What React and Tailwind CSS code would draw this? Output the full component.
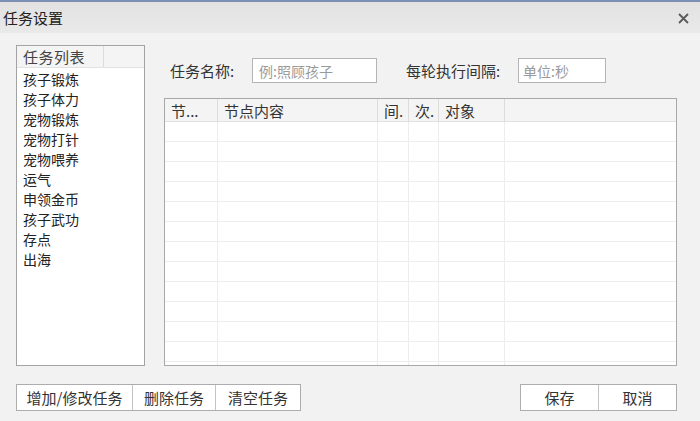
import React from 'react';

const tasks = ['孩子锻炼', '孩子体力', '宠物锻炼', '宠物打针', '宠物喂养', '运气', '申领金币', '孩子武功', '存点', '出海'];
const columns = ['节...', '节点内容', '间.', '次.', '对象', ''];
const rows = Array.from({ length: 13 });

const App = () => {
    return (
        <div className="w-[700px] h-[421px] overflow-hidden flex flex-col bg-[#f2f2f2] text-[#2b2b2b] font-['Noto_Sans_CJK_SC','Noto_Sans',sans-serif]">
            {/* window top edge */}
            <div className="h-[2px] shrink-0 bg-[#7c8fb5]" />

            {/* Title bar */}
            <div className="h-[31px] shrink-0 flex items-center justify-between pl-[3px] pr-[11px] bg-gradient-to-b from-[#e2e2e2] to-[#e9e9e9]">
                <span className="text-[15px] leading-none text-[#222]">任务设置</span>
                <svg width="11" height="11" viewBox="0 0 11 11" className="mt-[2px]">
                    <path d="M1 1 L10 10 M10 1 L1 10" stroke="#5a5a5a" strokeWidth="1.8" />
                </svg>
            </div>

            <div className="flex-1 min-h-0 flex flex-col pl-[16px] pr-[23px] pt-[12px] pb-[10px]">
                <div className="flex-1 flex gap-[19px] min-h-0">
                    {/* Task list */}
                    <div className="w-[129px] border border-[#a3a3a3] bg-white flex flex-col">
                        <div className="h-[22px] shrink-0 flex bg-[#f4f4f4] border-b border-[#e2e2e2]">
                            <div className="w-[87px] border-r border-[#dcdcdc] pl-[6px] flex items-center text-[15px] leading-none tracking-[0.5px] text-[#444]">任务列表</div>
                            <div className="flex-1" />
                        </div>
                        <div className="pt-[1px]">
                            {tasks.map((t) => (
                                <div key={t} className="h-[20px] pl-[6px] flex items-center text-[14px] leading-none text-[#222]">{t}</div>
                            ))}
                        </div>
                    </div>

                    {/* Right side */}
                    <div className="w-[513px] min-h-0 flex flex-col pt-[13px]">
                        <div className="h-[25px] shrink-0 flex items-center">
                            <div className="w-[88px] pl-[6px] text-[15px] leading-none text-[#333]">任务名称:</div>
                            <div className="w-[125px] h-[25px] border border-[#b4b4b4] bg-white flex items-center pl-[6px] text-[14px] leading-none text-[#9a9a9a]">例:照顾孩子</div>
                            <div className="w-[29px]" />
                            <div className="w-[112px] text-[15px] leading-none text-[#333]">每轮执行间隔:</div>
                            <div className="w-[88px] h-[25px] border border-[#b4b4b4] bg-white flex items-center pl-[4px] text-[14px] leading-none text-[#9a9a9a]">单位:秒</div>
                        </div>

                        {/* Node table */}
                        <div className="mt-[15px] flex-1 min-h-0 border border-[#a8a8a8] bg-white overflow-hidden">
                            <div className="grid grid-cols-[53px_160px_31px_30px_66px_1fr] h-[23px] bg-[#f4f4f4] border-b border-[#e0e0e0]">
                                {columns.map((c, i) => (
                                    <div key={i} className={`flex items-center pl-[6px] text-[15px] leading-none text-[#333] whitespace-nowrap overflow-hidden ${i < 5 ? 'border-r border-[#dcdcdc]' : ''}`}>{c}</div>
                                ))}
                            </div>
                            {rows.map((_, r) => (
                                <div key={r} className="grid grid-cols-[53px_160px_31px_30px_66px_1fr] h-[20px] border-b border-[#ededed]">
                                    {columns.map((_, i) => (
                                        <div key={i} className={i < 5 ? 'border-r border-[#ededed]' : ''} />
                                    ))}
                                </div>
                            ))}
                        </div>
                    </div>
                </div>

                {/* Bottom buttons */}
                <div className="mt-[18px] h-[27px] shrink-0 flex justify-between">
                    <div className="flex border border-[#adadad] bg-white">
                        <button className="w-[116px] border-r border-[#c4c4c4] text-[15px] leading-none text-[#333]">增加/修改任务</button>
                        <button className="w-[83px] border-r border-[#c4c4c4] text-[15px] leading-none text-[#333]">删除任务</button>
                        <button className="w-[84px] text-[15px] leading-none text-[#333]">清空任务</button>
                    </div>
                    <div className="flex border border-[#adadad] bg-white">
                        <button className="w-[78px] border-r border-[#c4c4c4] text-[15px] leading-none text-[#333]">保存</button>
                        <button className="w-[77px] text-[15px] leading-none text-[#333]">取消</button>
                    </div>
                </div>
            </div>
        </div>
    );
};

export default App;
